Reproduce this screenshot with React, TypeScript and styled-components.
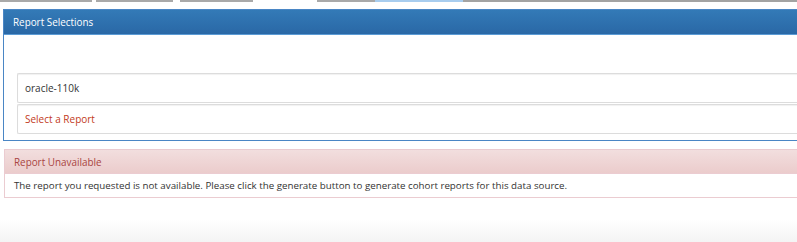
import styled, { createGlobalStyle } from 'styled-components';

const GlobalStyle = createGlobalStyle`
  html, body {
    margin: 0;
    padding: 0;
    overflow: hidden;
  }
  body {
    width: 797px;
    height: 242px;
    font-family: "Open Sans", "Noto Sans", sans-serif;
    color: #333;
    background: linear-gradient(to bottom, #fff 0, #fff 220px, #f4f4f4 242px);
  }
`;

const Page = styled.div`
  width: 830px;
  height: 242px;
  display: flex;
  flex-direction: column;
`;

const TabStrip = styled.div`
  display: flex;
  height: 2px;
  margin-bottom: 7px;
`;

const TabLine = styled.div<{ $w: number; $color: string }>`
  width: ${p => p.$w}px;
  flex: none;
  background: ${p => p.$color};
`;

const Panel = styled.div<{ $tone: 'primary' | 'danger' }>`
  margin-left: ${p => (p.$tone === 'primary' ? 3 : 4)}px;
  border: 1px solid ${p => (p.$tone === 'primary' ? '#4a86c5' : '#ebccd1')};
  border-right: none;
  background: #fff;
  display: flex;
  flex-direction: column;
`;

const PanelHeading = styled.div<{ $tone: 'primary' | 'danger' }>`
  height: ${p => (p.$tone === 'primary' ? 24 : 23)}px;
  display: flex;
  align-items: center;
  padding-left: 9px;
  font-size: 9.9px;
  color: ${p => (p.$tone === 'primary' ? '#fff' : '#a94442')};
  background: ${p =>
    p.$tone === 'primary'
      ? 'linear-gradient(to bottom, #337ab7 0, #2a68a6 100%)'
      : 'linear-gradient(to bottom, #f2dede 0, #ebcccc 100%)'};
  border-bottom: 1px solid ${p => (p.$tone === 'primary' ? '#5b9bd5' : '#ebccd1')};
`;

const SelectionBody = styled.div`
  padding: 38px 0 6px 13px;
  display: flex;
  flex-direction: column;
  gap: 1px;
`;

const Field = styled.div<{ $placeholder?: boolean }>`
  height: 28px;
  display: flex;
  align-items: center;
  padding-left: 7px;
  border: 1px solid #dcdcdc;
  border-right: none;
  border-radius: 2px 0 0 2px;
  box-shadow: inset 0 1px 1px rgba(0, 0, 0, 0.06);
  font-size: 10px;
  color: ${p => (p.$placeholder ? '#c23a22' : '#333')};
`;

const AlertGap = styled.div`
  height: 8px;
`;

const AlertBody = styled.div`
  height: 23px;
  display: flex;
  align-items: center;
  padding-left: 9px;
  font-size: 9.75px;
  color: #333;
`;

const tabs = [
  { w: 92, c: '#a9a9a9' },
  { w: 4, c: '#fff' },
  { w: 77, c: '#a9a9a9' },
  { w: 7, c: '#fff' },
  { w: 73, c: '#a9a9a9' },
  { w: 64, c: '#fff' },
  { w: 58, c: '#a9a9a9' },
  { w: 88, c: '#a8cdef' },
  { w: 367, c: '#a3a3a3' },
];

export default function App() {
  return (
    <Page>
      <GlobalStyle />
      <TabStrip>
        {tabs.map((t, i) => (
          <TabLine key={i} $w={t.w} $color={t.c} />
        ))}
      </TabStrip>

      <Panel $tone="primary">
        <PanelHeading $tone="primary">Report Selections</PanelHeading>
        <SelectionBody>
          <Field>oracle-110k</Field>
          <Field $placeholder>Select a Report</Field>
        </SelectionBody>
      </Panel>

      <AlertGap />

      <Panel $tone="danger">
        <PanelHeading $tone="danger">Report Unavailable</PanelHeading>
        <AlertBody>
          The report you requested is not available. Please click the generate button to generate cohort reports for this data source.
        </AlertBody>
      </Panel>
    </Page>
  );
}
